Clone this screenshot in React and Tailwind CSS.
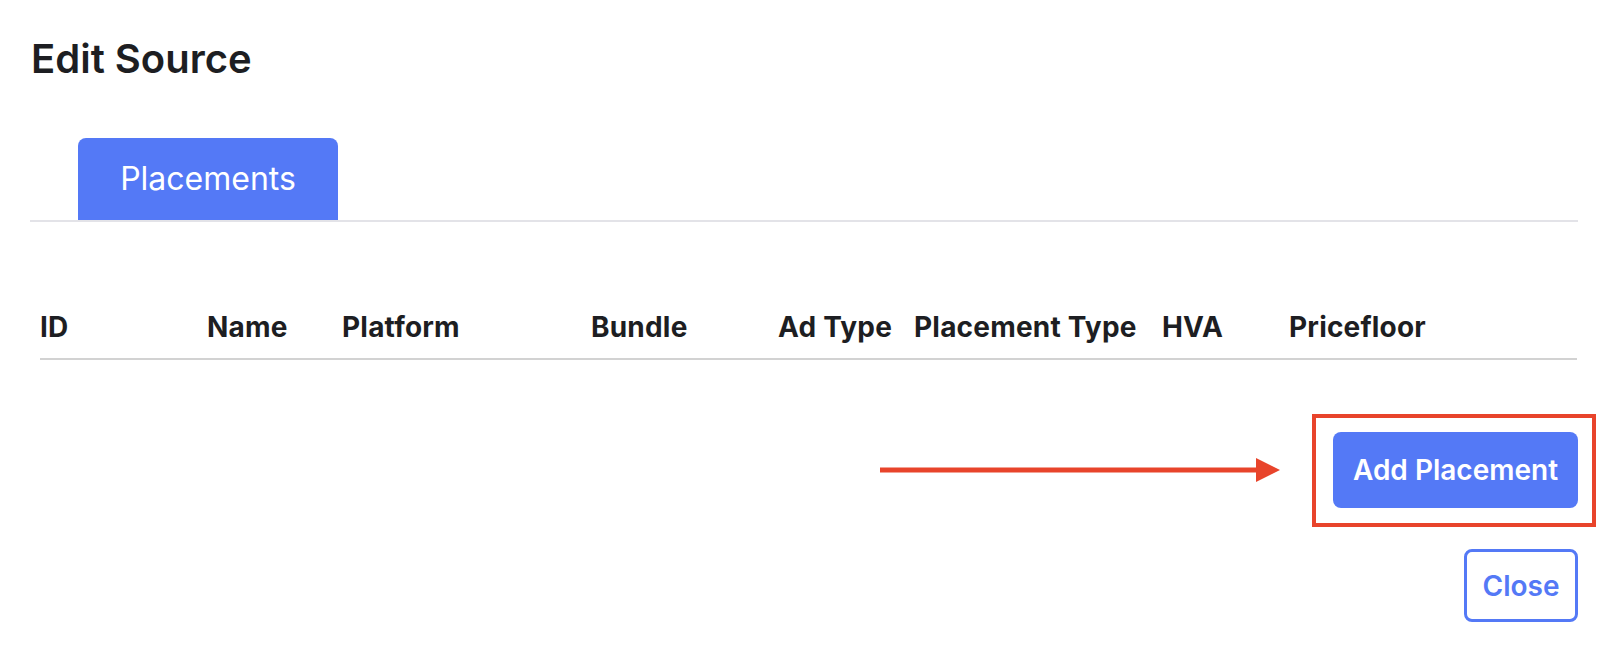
import React from 'react';

const columns = [
  { label: 'ID', width: 'w-[167px]' },
  { label: 'Name', width: 'w-[135px]' },
  { label: 'Platform', width: 'w-[249px]' },
  { label: 'Bundle', width: 'w-[187px]' },
  { label: 'Ad Type', width: 'w-[136px]' },
  { label: 'Placement Type', width: 'w-[248px]' },
  { label: 'HVA', width: 'w-[127px]' },
  { label: 'Pricefloor', width: 'flex-1' },
];

function App() {
  return (
    <div
      className="min-h-screen w-full bg-white text-[#1d1e22]"
      style={{ fontFamily: 'Inter, "Noto Sans", sans-serif' }}
    >
      {/* Header */}
      <h1 className="pl-[31px] pt-[35px] text-[40px] font-semibold leading-[48px]">
        Edit Source
      </h1>

      {/* Tabs */}
      <div className="mx-[30px] mt-[55px] flex border-b-2 border-[#e3e3e8] pl-[48px]">
        <button className="flex h-[82px] w-[260px] items-center justify-center rounded-t-[8px] bg-[#5479f6] text-[32px] font-normal text-white">
          Placements
        </button>
      </div>

      {/* Table header */}
      <div className="ml-[40px] mr-[31px] mt-[88px] flex border-b-2 border-[#d2d2d2] pb-[14px]">
        {columns.map((col) => (
          <div key={col.label} className={`${col.width} text-[28px] font-bold leading-[34px] whitespace-nowrap tracking-[0.2px]`}>
            {col.label}
          </div>
        ))}
      </div>

      {/* Actions */}
      <div className="mr-[30px] mt-[72px] flex flex-col items-end gap-[41px]">
        <div className="relative">
          <svg
            className="absolute right-[298px] top-[25px]"
            width="400"
            height="26"
            viewBox="0 0 400 26"
          >
            <rect x="0" y="10.5" width="378" height="5" fill="#e8442b" />
            <polygon points="376,1 400,13 376,25" fill="#e8442b" />
          </svg>
          <div className="pointer-events-none absolute -bottom-[19px] -left-[21px] -right-[18px] -top-[18px] border-[4px] border-[#e8442b]" />
          <button className="flex h-[76px] w-[245px] items-center justify-center rounded-[8px] bg-[#5479f6] text-[28px] font-semibold text-white">
            Add Placement
          </button>
        </div>
        <button className="flex h-[73px] w-[114px] items-center justify-center rounded-[8px] border-[3px] border-[#5479f6] bg-white text-[28px] font-semibold text-[#5479f6]">
          Close
        </button>
      </div>
    </div>
  );
}

export default App;
